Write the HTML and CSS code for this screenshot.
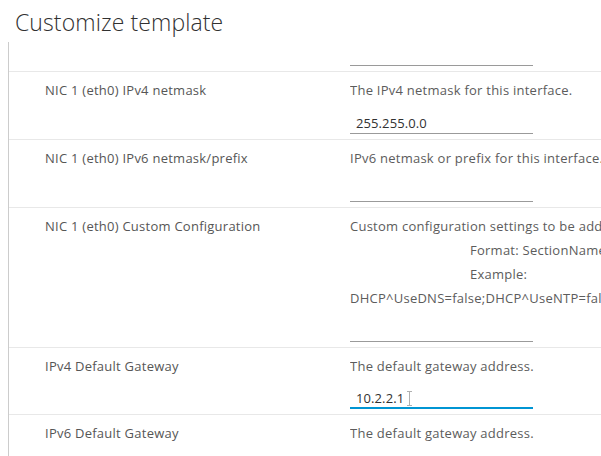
FILE: index.html
```html
<!DOCTYPE html>
<html>
<head>
<meta charset="utf-8">
<link rel="stylesheet" href="styles.css">
</head>
<body>
<h1 class="title">Customize template</h1>
<div class="panel">
  <div class="row row-partial">
    <div class="label"></div>
    <div class="field"><div class="input"></div></div>
  </div>
  <div class="row">
    <div class="label">NIC 1 (eth0) IPv4 netmask</div>
    <div class="field">
      <div class="desc">The IPv4 netmask for this interface.</div>
      <div class="input">255.255.0.0</div>
    </div>
  </div>
  <div class="row">
    <div class="label">NIC 1 (eth0) IPv6 netmask/prefix</div>
    <div class="field">
      <div class="desc">IPv6 netmask or prefix for this interface.</div>
      <div class="input"></div>
    </div>
  </div>
  <div class="row">
    <div class="label">NIC 1 (eth0) Custom Configuration</div>
    <div class="field">
      <div class="desc">Custom configuration settings to be add</div>
      <div class="desc indent">Format: SectionName</div>
      <div class="desc indent">Example:</div>
      <div class="desc">DHCP^UseDNS=false;DHCP^UseNTP=fal</div>
      <div class="input"></div>
    </div>
  </div>
  <div class="row">
    <div class="label">IPv4 Default Gateway</div>
    <div class="field">
      <div class="desc">The default gateway address.</div>
      <div class="input focused">10.2.2.1<span class="ibeam"></span></div>
    </div>
  </div>
  <div class="row row-last">
    <div class="label">IPv6 Default Gateway</div>
    <div class="field">
      <div class="desc">The default gateway address.</div>
    </div>
  </div>
</div>
</body>
</html>
```
FILE: styles.css
```css
html, body {
  margin: 0;
  padding: 0;
  overflow: hidden;
  background: #fff;
}
body {
  font-family: "Open Sans", "Liberation Sans", sans-serif;
  color: #565656;
  width: 601px;
  height: 456px;
}
.title {
  margin: 0;
  padding: 8px 0 0 15px;
  height: 34px;
  font-size: 23px;
  font-weight: 300;
  letter-spacing: 0.1px;
  line-height: 28px;
  color: #313131;
}
.panel {
  margin-left: 8px;
  border-left: 1px solid #cccccc;
  width: 592px;
  overflow: hidden;
}
.row {
  display: flex;
  border-bottom: 1px solid #e8e8e8;
  padding: 6px 0 5px 0;
}
.row-partial {
  padding-top: 1px;
}
.row-last {
  border-bottom: none;
  min-height: 60px;
}
.label {
  width: 305px;
  padding-left: 36px;
  font-size: 13px;
  letter-spacing: 0.25px;
  line-height: 24px;
  flex: none;
}
.field {
  flex: none;
  width: 251px;
  overflow: hidden;
}
.desc {
  font-size: 13px;
  letter-spacing: 0.25px;
  line-height: 24px;
  white-space: nowrap;
  color: #5c5c5c;
}
.indent {
  padding-left: 120px;
}
.input {
  position: relative;
  width: 183px;
  height: 23px;
  margin-top: 9px;
  padding-left: 6px;
  box-sizing: border-box;
  border-bottom: 1px solid #9a9a9a;
  font-size: 13px;
  letter-spacing: 0.1px;
  line-height: 24px;
  color: #313131;
}
.row-partial .input {
  margin-top: 0;
}
.focused {
  border-bottom: 2px solid #0095d3;
  margin-top: 8px;
}
.ibeam {
  position: absolute;
  left: 59px;
  top: 5px;
  width: 1px;
  height: 15px;
  background: #b0b0b0;
}
.ibeam::before, .ibeam::after {
  content: "";
  position: absolute;
  left: -2px;
  width: 5px;
  height: 1px;
  background: #b0b0b0;
}
.ibeam::before { top: 0; }
.ibeam::after { bottom: 0; }
```
